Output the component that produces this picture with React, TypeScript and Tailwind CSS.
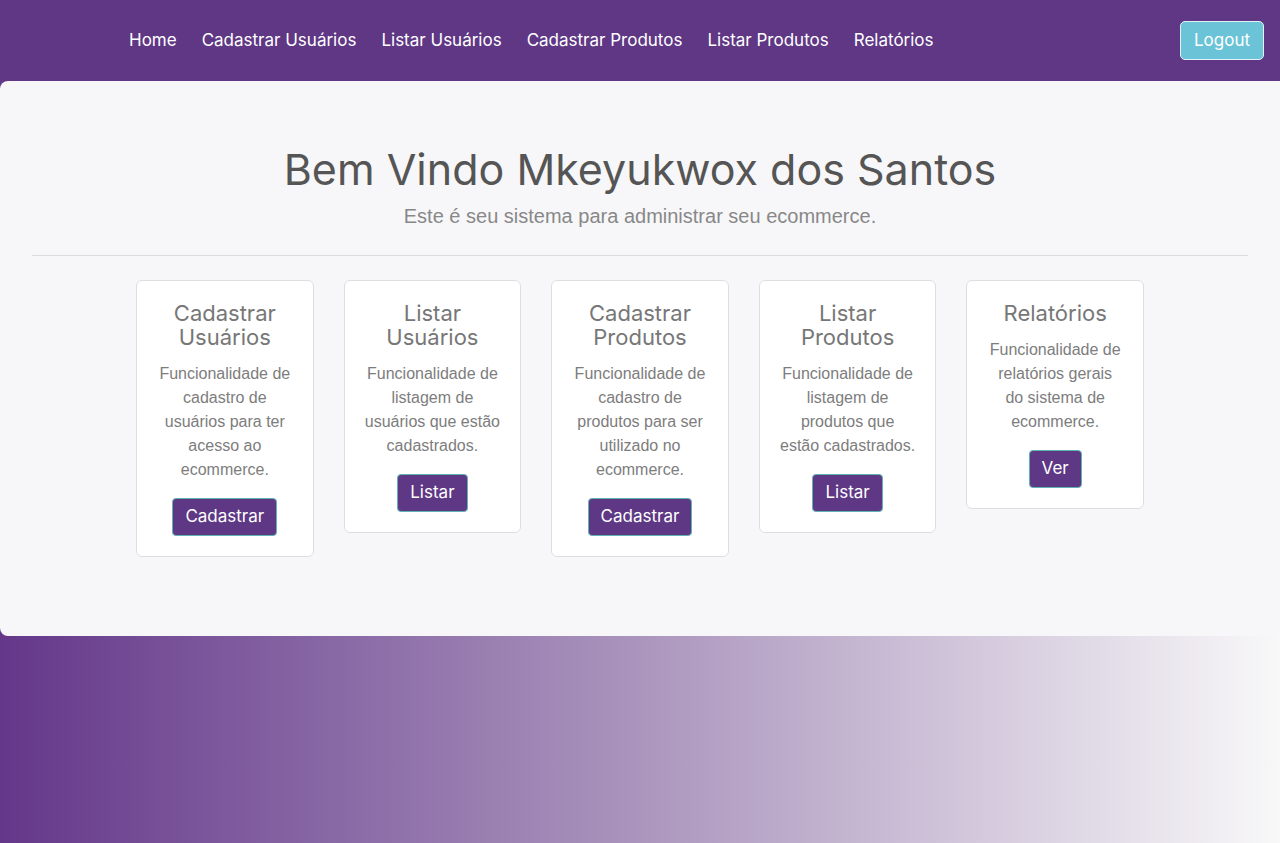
import React from "react";

const cards = [
  {
    title: ["Cadastrar", "Usuários"],
    body: "Funcionalidade de cadastro de usuários para ter acesso ao ecommerce.",
    btn: "Cadastrar",
  },
  {
    title: ["Listar", "Usuários"],
    body: "Funcionalidade de listagem de usuários que estão cadastrados.",
    btn: "Listar",
  },
  {
    title: ["Cadastrar", "Produtos"],
    body: "Funcionalidade de cadastro de produtos para ser utilizado no ecommerce.",
    btn: "Cadastrar",
  },
  {
    title: ["Listar", "Produtos"],
    body: "Funcionalidade de listagem de produtos que estão cadastrados.",
    btn: "Listar",
  },
  {
    title: ["Relatórios"],
    body: "Funcionalidade de relatórios gerais do sistema de ecommerce.",
    btn: "Ver",
  },
];

const links = [
  "Home",
  "Cadastrar Usuários",
  "Listar Usuários",
  "Cadastrar Produtos",
  "Listar Produtos",
  "Relatórios",
];

export default function App() {
  return (
    <div className="min-h-[843px] w-full bg-gradient-to-r from-[#65378a] via-[#ab95bd] to-[#f8f8f8] font-['Inter',sans-serif]">
      <nav className="flex h-[81px] items-center bg-[#5f3785] pl-[129px] pr-4">
        <ul className="flex items-center gap-[25px]">
          {links.map((l) => (
            <li key={l} className="text-[17px] text-white">
              {l}
            </li>
          ))}
        </ul>
        <button className="ml-auto h-[39px] w-[84px] rounded-[5px] border border-[#e4f2f6] bg-[#6ac3d6] text-[17px] text-white">
          Logout
        </button>
      </nav>
      <main className="flex h-[555px] flex-col rounded-lg bg-[#f7f7f9] px-8">
        <h1 className="mt-[60px] text-center text-[43px] leading-[56px] text-[#555555]">
          Bem Vindo Mkeyukwox dos Santos
        </h1>
        <p className="mt-[7px] text-center font-['Liberation_Sans',Arial,sans-serif] text-[20px] leading-[24px] text-[#888888]">
          Este é seu sistema para administrar seu ecommerce.
        </p>
        <hr className="mt-[27px] border-t border-[#dcdcdc]" />
        <div className="mt-6 flex items-start justify-center gap-[30px]">
          {cards.map((c, i) => (
            <div
              key={i}
              className="w-[177.6px] rounded-[6px] border border-[#dedede] bg-white px-5 pb-5 pt-5 text-center"
            >
              <h5 className="text-[22px] leading-[24px] text-[#777777]">
                {c.title.map((t, j) => (
                  <span key={j} className="block">
                    {t}
                  </span>
                ))}
              </h5>
              <p className="mt-[13px] font-['Liberation_Sans',Arial,sans-serif] text-[16px] leading-[24px] text-[#7d7d7d]">
                {c.body}
              </p>
              <button className="mt-4 h-[38px] rounded-[4px] border border-[#5fb3b3] bg-[#5e3785] px-3 text-[17px] text-white">
                {c.btn}
              </button>
            </div>
          ))}
        </div>
      </main>
    </div>
  );
}
